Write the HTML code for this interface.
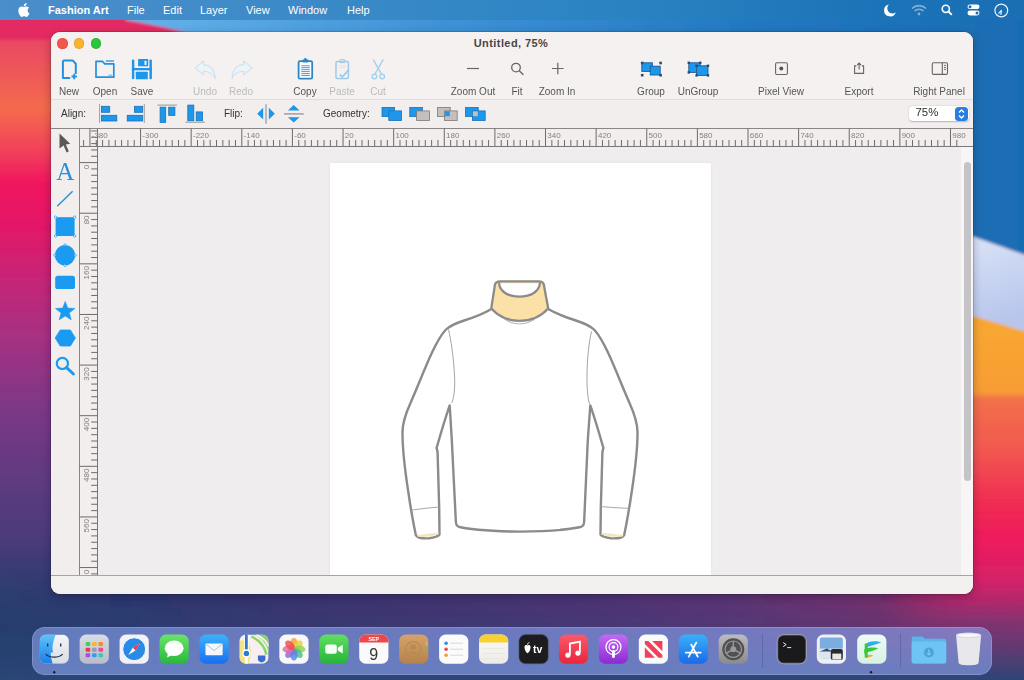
<!DOCTYPE html>
<html><head><meta charset="utf-8">
<style>
*{margin:0;padding:0;box-sizing:border-box}
html,body{width:1024px;height:680px;overflow:hidden}
body{position:relative;font-family:"Liberation Sans",sans-serif;background:#2c3f72}
.abs{position:absolute}
#wall{position:absolute;left:0;top:0;width:1024px;height:680px;overflow:hidden}
#menubar{position:absolute;left:0;top:0;width:1024px;height:20px;color:#fff;font-size:11px}
#menubar span{position:absolute;top:4.2px;white-space:nowrap}
#win{position:absolute;left:50.6px;top:32px;width:922.4px;height:561.8px;border-radius:9px;background:#f4f0f0;overflow:hidden;box-shadow:0 0 0 0.5px rgba(30,20,40,0.35),0 3px 10px rgba(10,10,30,0.3)}
.tl{position:absolute;width:10.4px;height:10.4px;border-radius:50%;top:6px;box-shadow:inset 0 0 0 0.6px rgba(0,0,0,0.14)}
.lbl{position:absolute;top:55px;font-size:10px;color:#555;white-space:nowrap;transform:translateX(-50%)}
.dis{color:#bbb}
svg{position:absolute;overflow:visible}
#dock{position:absolute;left:32px;top:627px;width:960px;height:48px;border-radius:13px;background:rgba(140,165,240,0.6);box-shadow:inset 0 0 0 0.7px rgba(255,255,255,0.22)}
.di{position:absolute;top:7px;width:29px;height:29px;border-radius:7px}
</style></head><body>
<div id="wall"><svg width="1024" height="680" viewBox="0 0 1024 680" style="left:0;top:0">
<defs>
<linearGradient id="gL" x1="0" y1="0" x2="0" y2="680" gradientUnits="userSpaceOnUse">
<stop offset="0.03" stop-color="#e2366e"/>
<stop offset="0.065" stop-color="#ea4a62"/>
<stop offset="0.16" stop-color="#f46a4c"/>
<stop offset="0.22" stop-color="#f2425a"/>
<stop offset="0.27" stop-color="#f0165e"/>
<stop offset="0.33" stop-color="#e41868"/>
<stop offset="0.47" stop-color="#b02e80"/>
<stop offset="0.6" stop-color="#7c3886"/>
<stop offset="0.74" stop-color="#563a7e"/>
<stop offset="0.87" stop-color="#3a3c74"/>
<stop offset="1" stop-color="#2a3c6a"/>
</linearGradient>
<linearGradient id="gB" x1="0" y1="0" x2="1024" y2="0" gradientUnits="userSpaceOnUse">
<stop offset="0" stop-color="#223c6c"/>
<stop offset="0.15" stop-color="#2e3870"/>
<stop offset="0.3" stop-color="#3a3470"/>
<stop offset="0.55" stop-color="#4a3474"/>
<stop offset="0.72" stop-color="#5c3474"/>
<stop offset="0.86" stop-color="#74306e"/>
<stop offset="1" stop-color="#a02c68"/>
</linearGradient>
<linearGradient id="gBv" x1="0" y1="600" x2="0" y2="680" gradientUnits="userSpaceOnUse">
<stop offset="0" stop-color="#2c4676" stop-opacity="0"/>
<stop offset="0.55" stop-color="#2c4676" stop-opacity="0.35"/>
<stop offset="1" stop-color="#2c4676" stop-opacity="1"/>
</linearGradient>
<linearGradient id="gT" x1="130" y1="0" x2="1024" y2="0" gradientUnits="userSpaceOnUse">
<stop offset="0" stop-color="#64b2ea"/>
<stop offset="0.35" stop-color="#3e92d6"/>
<stop offset="0.7" stop-color="#2278c0"/>
<stop offset="1" stop-color="#196cb2"/>
</linearGradient>
<linearGradient id="gR" x1="0" y1="330" x2="0" y2="680" gradientUnits="userSpaceOnUse">
<stop offset="0" stop-color="#f8a632"/>
<stop offset="0.177" stop-color="#f89c34"/>
<stop offset="0.197" stop-color="#f2704a"/>
<stop offset="0.343" stop-color="#f25850"/>
<stop offset="0.486" stop-color="#f02e52"/>
<stop offset="0.6" stop-color="#ee1a5c"/>
<stop offset="0.714" stop-color="#d42268"/>
<stop offset="0.83" stop-color="#9a2e70" stop-opacity="0.8"/>
<stop offset="1" stop-color="#3a4480" stop-opacity="0"/>
</linearGradient>
<linearGradient id="gRh" x1="880" y1="0" x2="1024" y2="0" gradientUnits="userSpaceOnUse">
<stop offset="0" stop-color="#fff" stop-opacity="0"/>
<stop offset="0.6" stop-color="#fff" stop-opacity="1"/>
</linearGradient>
<linearGradient id="gLh" x1="0" y1="0" x2="0" y2="680" gradientUnits="userSpaceOnUse"><stop offset="0.8" stop-color="#fff"/><stop offset="0.93" stop-color="#000"/></linearGradient>
<mask id="mL"><rect x="-10" y="-10" width="200" height="700" fill="url(#gLh)"/></mask>
<mask id="mR"><rect x="860" y="0" width="200" height="700" fill="url(#gRh)"/><rect x="960" y="0" width="100" height="600" fill="#fff"/></mask>
<linearGradient id="gW" x1="973" y1="240" x2="1000" y2="320" gradientUnits="userSpaceOnUse">
<stop offset="0" stop-color="#d8e2f6"/>
<stop offset="1" stop-color="#b8c6ec"/>
</linearGradient>
<filter id="bl" x="-5%" y="-5%" width="110%" height="110%"><feGaussianBlur stdDeviation="1.5"/></filter>
</defs>
<g filter="url(#bl)">
<rect x="-10" y="-10" width="1044" height="700" fill="url(#gB)"/>
<rect x="-10" y="-10" width="120" height="690" fill="url(#gL)" mask="url(#mL)"/>
<path d="M860,290 L1034,300 L1034,690 L860,690 Z" fill="url(#gR)" mask="url(#mR)"/>
<rect x="-10" y="590" width="1044" height="100" fill="url(#gBv)"/>
<path d="M100,-10 L1034,-10 L1034,258 L973,237 L960,232 L960,60 L120,40 Z" fill="url(#gT)"/>
<path d="M-10,-10 L112,-10 L126,20 C145,23 165,27 192,34 L70,40 L-10,40 Z" fill="#e42c62"/>
<path d="M960,232 L1034,258 L1034,334 L960,312 Z" fill="url(#gW)"/>
</g>
</svg></div>
<div id="menubar" style="background:linear-gradient(90deg,#4a8ecb 0%,#3c8ac8 30%,#2a84c2 60%,#1c74b8 85%,#1a6eb4 100%)">
<svg width="12" height="14" viewBox="0 0 12 14" style="left:18px;top:3px"><path d="M9.6,7.4c0-1.7,1.4-2.5,1.5-2.6c-0.8-1.2-2.1-1.3-2.5-1.4c-1.1-0.1-2.1,0.6-2.6,0.6c-0.6,0-1.4-0.6-2.3-0.6C2.6,3.4,1.5,4.1,0.9,5.2c-1.2,2.1-0.3,5.3,0.9,7c0.6,0.8,1.3,1.8,2.1,1.7c0.9,0,1.2-0.6,2.2-0.6c1.1,0,1.3,0.6,2.3,0.6c0.9,0,1.5-0.9,2.1-1.7c0.7-1,0.9-1.9,1-2C11.3,10.2,9.6,9.5,9.6,7.4z M7.9,2.3c0.5-0.6,0.8-1.4,0.7-2.3C7.9,0.1,7.1,0.5,6.6,1.1C6.1,1.6,5.7,2.5,5.8,3.3C6.6,3.4,7.4,2.9,7.9,2.3z" fill="#fff"/></svg>
<span style="left:48px;font-weight:bold">Fashion Art</span>
<span style="left:127px">File</span>
<span style="left:163px">Edit</span>
<span style="left:200px">Layer</span>
<span style="left:246px">View</span>
<span style="left:288px">Window</span>
<span style="left:347px">Help</span>
<svg width="14" height="14" viewBox="0 0 14 14" style="left:883px;top:3px"><path d="M6,1.5 A6,6 0 1,0 12.8,9.2 A5,5 0 0,1 6,1.5 Z" fill="#fff"/></svg>
<svg width="16" height="12" viewBox="0 0 16 12" style="left:911px;top:4px;opacity:0.45"><path d="M1,4.5 A10,10 0 0,1 15,4.5" stroke="#fff" stroke-width="1.6" fill="none"/><path d="M3.5,7 A6.5,6.5 0 0,1 12.5,7" stroke="#fff" stroke-width="1.6" fill="none"/><circle cx="8" cy="10" r="1.4" fill="#fff"/></svg>
<svg width="12" height="12" viewBox="0 0 12 12" style="left:941px;top:4px"><circle cx="4.8" cy="4.8" r="3.6" stroke="#fff" stroke-width="1.6" fill="none"/><path d="M7.5,7.5 L10.8,10.8" stroke="#fff" stroke-width="1.8"/></svg>
<svg width="13" height="12" viewBox="0 0 13 12" style="left:967px;top:4px"><rect x="0.5" y="0.5" width="12" height="4.6" rx="2.3" fill="#fff"/><circle cx="3" cy="2.8" r="1.5" fill="#1c6db6"/><rect x="0.5" y="6.6" width="12" height="4.8" rx="2.4" fill="#fff"/><circle cx="10" cy="9" r="1.5" fill="#1c6db6"/></svg>
<svg width="15" height="15" viewBox="0 0 15 15" style="left:994px;top:2.5px"><circle cx="7.3" cy="7.5" r="6.4" stroke="#e8f4ff" stroke-width="1.2" fill="none"/><path d="M7.4,7.4 L6.9,11.4 M7.4,7.4 L4.9,10.2" stroke="#e8f4ff" stroke-width="1.2" stroke-linecap="round"/></svg>
</div>
<div id="win"><div id="wc" style="position:absolute;left:-50.6px;top:-32px;width:1024px;height:680px">
<!-- title/toolbar bg -->
<div class="abs" style="left:51px;top:32px;width:922px;height:67px;background:#f5f1f1"></div>
<div class="abs" style="left:51px;top:98.8px;width:922px;height:1.6px;background:#e0dcdc"></div>
<div class="abs" style="left:51px;top:100px;width:922px;height:28px;background:#f2eeee"></div>
<div class="tl" style="left:57.2px;top:38.4px;background:#f4564c"></div>
<div class="tl" style="left:73.9px;top:38.4px;background:#f8b42a"></div>
<div class="tl" style="left:91px;top:38.4px;background:#2ac63c"></div>
<div class="abs" style="left:0;width:1022px;top:37px;text-align:center;font-size:11px;letter-spacing:0.42px;font-weight:bold;color:#4a4545">Untitled, 75%</div>
<!-- labels -->
<div class="lbl" style="left:69px;top:85.5px">New</div>
<div class="lbl" style="left:105px;top:85.5px">Open</div>
<div class="lbl" style="left:142px;top:85.5px">Save</div>
<div class="lbl dis" style="left:205px;top:85.5px">Undo</div>
<div class="lbl dis" style="left:241px;top:85.5px">Redo</div>
<div class="lbl" style="left:305px;top:85.5px">Copy</div>
<div class="lbl dis" style="left:342px;top:85.5px">Paste</div>
<div class="lbl dis" style="left:378px;top:85.5px">Cut</div>
<div class="lbl" style="left:473px;top:85.5px">Zoom Out</div>
<div class="lbl" style="left:517px;top:85.5px">Fit</div>
<div class="lbl" style="left:557px;top:85.5px">Zoom In</div>
<div class="lbl" style="left:651px;top:85.5px">Group</div>
<div class="lbl" style="left:698px;top:85.5px">UnGroup</div>
<div class="lbl" style="left:781px;top:85.5px">Pixel View</div>
<div class="lbl" style="left:859px;top:85.5px">Export</div>
<div class="lbl" style="left:939px;top:85.5px">Right Panel</div>
<!-- align bar labels -->
<div class="abs" style="left:61px;top:108px;font-size:10px;color:#333">Align:</div>
<div class="abs" style="left:224px;top:108px;font-size:10px;color:#333">Flip:</div>
<div class="abs" style="left:323px;top:108px;font-size:10px;color:#333">Geometry:</div>
<!-- zoom popup -->
<div class="abs" style="left:909px;top:106px;width:60px;height:15px;border-radius:4px;background:#fff;box-shadow:0 0.5px 1.5px rgba(0,0,0,0.25)"></div>
<div class="abs" style="left:915.5px;top:105px;font-size:11.4px;color:#2e2e2e;line-height:15px">75%</div>
<div class="abs" style="left:955px;top:106.5px;width:13px;height:14px;border-radius:3.5px;background:#2a7de0"></div>
<svg width="13" height="14" viewBox="0 0 13 14" style="left:955px;top:106.5px"><path d="M4,5.5 L6.5,3 L9,5.5 M4,8.5 L6.5,11 L9,8.5" stroke="#fff" stroke-width="1.3" fill="none"/></svg>
<!-- rulers & canvas -->
<div class="abs" style="left:51px;top:128px;width:922px;height:1px;background:#8a8686"></div>
<div class="abs" style="left:51px;top:129px;width:28px;height:446px;background:#f2eeee"></div>
<div class="abs" style="left:80px;top:129px;width:893px;height:17px;background:#f2eeee"></div>
<div class="abs" style="left:80px;top:146px;width:893px;height:1px;background:#7c7878"></div>
<div class="abs" style="left:79px;top:129px;width:1px;height:446px;background:#8a8686"></div>
<div class="abs" style="left:81px;top:147px;width:16px;height:428px;background:#f2eeee"></div>
<div class="abs" style="left:97px;top:129px;width:1px;height:446px;background:#7c7878"></div>
<div class="abs" style="left:98px;top:147px;width:875px;height:428px;background:#efedee"></div>
<div class="abs" style="left:330px;top:163px;width:381px;height:412px;background:#fff;box-shadow:0 0 3px rgba(0,0,0,0.06)"></div>
<div class="abs" style="left:961px;top:147px;width:12px;height:428px;background:#f7f5f5"></div>
<div class="abs" style="left:964px;top:162px;width:7px;height:319px;border-radius:3.5px;background:#c4c4c6"></div>
<!--SVGS-->
<svg width="1024" height="680" style="left:0;top:0"><path d="M62.9,60.4 H72.6 L75.8,63.8 V74 M70.2,77.9 H62.9 V60.4" stroke="#2291df" stroke-width="2" fill="none" stroke-linejoin="round"/><path d="M74.2,73.8 V79.2 M71.5,76.5 H76.9" stroke="#2291df" stroke-width="1.9" fill="none"/><path d="M96,61.3 H102.4 L104.8,63.8 H113.8 V77.2 H96 Z" stroke="#2291df" stroke-width="1.7" fill="none" stroke-linejoin="round"/><path d="M105.8,61 H114" stroke="#2291df" stroke-width="1.3" fill="none"/><path d="M108.5,75.2 H112.2" stroke="#2291df" stroke-width="1" fill="none" opacity="0.7"/><rect x="131.9" y="59.5" width="2.4" height="19.8" rx="1.1" fill="#1e96ea"/><rect x="149.4" y="59.5" width="2.5" height="19.8" rx="1.1" fill="#1e96ea"/><rect x="138.1" y="59.1" width="10.1" height="7.2" rx="0.5" fill="#1e96ea"/><rect x="144.5" y="60.8" width="2" height="4.3" rx="0.5" fill="#f5f1f1"/><rect x="131.9" y="68" width="20" height="2.3" fill="#1e96ea"/><rect x="135.8" y="71.7" width="12" height="7.6" rx="0.5" fill="#1e96ea"/><path d="M195.2,67.8 L203.5,60.9 V64.6 C209.5,64.6 214.8,68.8 215.2,78.6 C213,73.6 208.8,71.2 203.5,71.2 V74.8 Z" stroke="#cde0ee" stroke-width="1.1" fill="#edf3f7" stroke-linejoin="round"/><path d="M252,67.8 L243.7,60.9 V64.6 C237.7,64.6 232.4,68.8 232,78.6 C234.2,73.6 238.4,71.2 243.7,71.2 V74.8 Z" stroke="#cde0ee" stroke-width="1.1" fill="#edf3f7" stroke-linejoin="round"/><rect x="298.6" y="61.2" width="13.6" height="17.4" rx="1.4" stroke="#2a88c8" stroke-width="1.8" fill="#fff"/><rect x="302.2" y="59.4" width="6.4" height="3" rx="0.8" fill="#2a88c8"/><circle cx="305.4" cy="59.3" r="1.3" fill="#2a88c8"/><path d="M301.3,65.8 H309.8" stroke="#3a8ec8" stroke-width="0.9"/><path d="M301.3,67.7 H309.8" stroke="#3a8ec8" stroke-width="0.9"/><path d="M301.3,69.7 H309.8" stroke="#3a8ec8" stroke-width="0.9"/><path d="M301.3,71.6 H309.8" stroke="#3a8ec8" stroke-width="0.9"/><path d="M301.3,73.6 H309.8" stroke="#3a8ec8" stroke-width="0.9"/><path d="M301.3,75.5 H309.8" stroke="#3a8ec8" stroke-width="0.9"/><rect x="336" y="61.5" width="12.4" height="17" rx="1.2" stroke="#9ccbe8" stroke-width="1.5" fill="none"/><rect x="339.5" y="59.6" width="5.6" height="3" rx="0.8" stroke="#9ccbe8" stroke-width="1" fill="none"/><path d="M339.8,74.5 L342.3,77 L348.5,70" stroke="#9ccbe8" stroke-width="1.8" fill="none"/><path d="M338.6,65.6 H346 M338.6,67.6 H346" stroke="#cfe4f2" stroke-width="0.7"/><path d="M373.2,59.5 L381.4,74 M383.2,59.5 L375,74" stroke="#a6cfea" stroke-width="1.5" fill="none"/><circle cx="374.4" cy="76.4" r="2.3" stroke="#a6cfea" stroke-width="1.4" fill="none"/><circle cx="382.2" cy="76.4" r="2.3" stroke="#a6cfea" stroke-width="1.4" fill="none"/><path d="M467,68.5 H479" stroke="#6a6464" stroke-width="1.2"/><circle cx="516" cy="67.6" r="4.3" stroke="#6a6464" stroke-width="1.3" fill="none"/><path d="M519.2,70.8 L523.4,74.8" stroke="#6a6464" stroke-width="1.4"/><path d="M552,68.5 H563.6 M557.8,62.8 V74.2" stroke="#6a6464" stroke-width="1.2"/><rect x="641.8" y="62.8" width="10.6" height="8.6" fill="#1e96ea" stroke="#1a5c98" stroke-width="0.9"/><rect x="650.2" y="66.2" width="10" height="8.8" fill="#1e96ea" stroke="#1a5c98" stroke-width="0.9"/><rect x="640.9000000000001" y="61.7" width="2.6" height="2.6" fill="#2a4a6a"/><rect x="659.3000000000001" y="61.7" width="2.6" height="2.6" fill="#2a4a6a"/><rect x="640.9000000000001" y="73.9" width="2.6" height="2.6" fill="#2a4a6a"/><rect x="659.3000000000001" y="73.9" width="2.6" height="2.6" fill="#2a4a6a"/><rect x="688.8" y="62.8" width="11.4" height="9.6" fill="#1e96ea" stroke="#1a5c98" stroke-width="0.9"/><rect x="696.6" y="65.8" width="11.4" height="9.6" fill="#1e96ea" stroke="#1a5c98" stroke-width="0.9"/><rect x="687.5999999999999" y="61.599999999999994" width="2.4" height="2.4" fill="#2a4a6a"/><rect x="699.0" y="61.599999999999994" width="2.4" height="2.4" fill="#2a4a6a"/><rect x="687.5999999999999" y="71.2" width="2.4" height="2.4" fill="#2a4a6a"/><rect x="695.4" y="64.6" width="2.4" height="2.4" fill="#2a4a6a"/><rect x="706.8" y="64.6" width="2.4" height="2.4" fill="#2a4a6a"/><rect x="695.4" y="74.2" width="2.4" height="2.4" fill="#2a4a6a"/><rect x="706.8" y="74.2" width="2.4" height="2.4" fill="#2a4a6a"/><rect x="775.6" y="62.7" width="11.8" height="11.8" rx="1.2" stroke="#6a6464" stroke-width="1.1" fill="none"/><circle cx="781.3" cy="68.6" r="2" fill="#555"/><path d="M856.4,65.9 H854.6 V73.4 H863.6 V65.9 H861.8" stroke="#6a6464" stroke-width="1.1" fill="none"/><path d="M859.1,69.5 V63.2 M857.2,65 L859.1,63 L861,65" stroke="#6a6464" stroke-width="1.1" fill="none"/><rect x="932.3" y="62.8" width="15.2" height="11.6" rx="1.2" stroke="#6a6464" stroke-width="1.1" fill="none"/><path d="M942.3,62.8 V74.4" stroke="#6a6464" stroke-width="1.1"/><path d="M944,65.4 H946 M944,67.5 H946 M944,69.4 H946" stroke="#6a6464" stroke-width="0.9"/><path d="M99.6,103.9 V123" stroke="#8a8a8a" stroke-width="0.8"/><rect x="101.4" y="106.3" width="8.3" height="6" fill="#1e96ea" stroke="#1872b8" stroke-width="0.8"/><rect x="101.4" y="115.3" width="15.4" height="5.7" fill="#1e96ea" stroke="#1872b8" stroke-width="0.8"/><path d="M144.3,103.9 V123" stroke="#8a8a8a" stroke-width="0.8"/><rect x="134.4" y="106.3" width="8.3" height="6" fill="#1e96ea" stroke="#1872b8" stroke-width="0.8"/><rect x="127.2" y="115.3" width="15.5" height="5.7" fill="#1e96ea" stroke="#1872b8" stroke-width="0.8"/><path d="M157.4,105.1 H177" stroke="#8a8a8a" stroke-width="0.9"/><rect x="160.1" y="107.2" width="5.6" height="15.2" fill="#1e96ea" stroke="#1872b8" stroke-width="0.8"/><rect x="168.7" y="107.2" width="6.2" height="8.2" fill="#1e96ea" stroke="#1872b8" stroke-width="0.8"/><path d="M185.4,122.2 H204.9" stroke="#8a8a8a" stroke-width="0.9"/><rect x="187.8" y="105.1" width="6" height="15.6" fill="#1e96ea" stroke="#1872b8" stroke-width="0.8"/><rect x="196.2" y="111.9" width="6.3" height="8.8" fill="#1e96ea" stroke="#1872b8" stroke-width="0.8"/><path d="M266,104.3 V123.7" stroke="#9a9494" stroke-width="1.2"/><path d="M263.2,107.8 V119.6 L257.2,113.7 Z" fill="#1e96ea"/><path d="M268.8,107.8 V119.6 L274.8,113.7 Z" fill="#1e96ea"/><path d="M284,113.9 H303.7" stroke="#9a9090" stroke-width="1.3"/><path d="M287.9,110.5 H299.6 L293.7,105 Z" fill="#1e96ea"/><path d="M287.9,117.2 H299.6 L293.7,122.5 Z" fill="#1e96ea"/><rect x="382" y="107.4" width="12.6" height="9.2" fill="#1e96ea" stroke="#1872b8" stroke-width="0.8"/><rect x="388.8" y="110.9" width="12.8" height="9.6" fill="#1e96ea" stroke="#1872b8" stroke-width="0.8"/><rect x="389.3" y="111.4" width="5" height="4.8" fill="#1e96ea"/><rect x="409.8" y="107.4" width="12.6" height="9.2" fill="#1e96ea" stroke="#1872b8" stroke-width="0.8"/><rect x="416.6" y="110.9" width="12.8" height="9.6" fill="#c4bfbc" stroke="#7e7874" stroke-width="0.8"/><rect x="437.6" y="107.4" width="12.6" height="9.2" fill="#c4bfbc" stroke="#7e7874" stroke-width="0.8"/><rect x="444.40000000000003" y="110.9" width="12.8" height="9.6" fill="#c4bfbc" stroke="#7e7874" stroke-width="0.8"/><rect x="444.8" y="111.30000000000001" width="5.0000000000000115" height="4.900000000000003" fill="#1e96ea"/><rect x="465.6" y="107.4" width="12.6" height="9.2" fill="#1e96ea" stroke="#1872b8" stroke-width="0.8"/><rect x="472.40000000000003" y="110.9" width="12.8" height="9.6" fill="#1e96ea" stroke="#1872b8" stroke-width="0.8"/><rect x="472.8" y="111.30000000000001" width="5.0000000000000115" height="4.900000000000003" fill="#c4bfbc"/></svg>
<svg width="1024" height="680" style="left:0;top:0;font-family:'Liberation Sans',sans-serif"><path d="M89.94,128.5 V146" stroke="#6e6a6a" stroke-width="1"/><text x="91.74" y="138" font-size="8" fill="#858080">-380</text><path d="M96.27,140 V146" stroke="#6e6a6a" stroke-width="1"/><path d="M102.59,140 V146" stroke="#6e6a6a" stroke-width="1"/><path d="M108.92,140 V146" stroke="#6e6a6a" stroke-width="1"/><path d="M115.25,140 V146" stroke="#6e6a6a" stroke-width="1"/><path d="M121.58,140 V146" stroke="#6e6a6a" stroke-width="1"/><path d="M127.91,140 V146" stroke="#6e6a6a" stroke-width="1"/><path d="M134.23,140 V146" stroke="#6e6a6a" stroke-width="1"/><path d="M140.56,128.5 V146" stroke="#6e6a6a" stroke-width="1"/><text x="142.36" y="138" font-size="8" fill="#858080">-300</text><path d="M146.89,140 V146" stroke="#6e6a6a" stroke-width="1"/><path d="M153.22,140 V146" stroke="#6e6a6a" stroke-width="1"/><path d="M159.54,140 V146" stroke="#6e6a6a" stroke-width="1"/><path d="M165.87,140 V146" stroke="#6e6a6a" stroke-width="1"/><path d="M172.20,140 V146" stroke="#6e6a6a" stroke-width="1"/><path d="M178.53,140 V146" stroke="#6e6a6a" stroke-width="1"/><path d="M184.85,140 V146" stroke="#6e6a6a" stroke-width="1"/><path d="M191.18,128.5 V146" stroke="#6e6a6a" stroke-width="1"/><text x="192.98" y="138" font-size="8" fill="#858080">-220</text><path d="M197.51,140 V146" stroke="#6e6a6a" stroke-width="1"/><path d="M203.84,140 V146" stroke="#6e6a6a" stroke-width="1"/><path d="M210.16,140 V146" stroke="#6e6a6a" stroke-width="1"/><path d="M216.49,140 V146" stroke="#6e6a6a" stroke-width="1"/><path d="M222.82,140 V146" stroke="#6e6a6a" stroke-width="1"/><path d="M229.15,140 V146" stroke="#6e6a6a" stroke-width="1"/><path d="M235.47,140 V146" stroke="#6e6a6a" stroke-width="1"/><path d="M241.80,128.5 V146" stroke="#6e6a6a" stroke-width="1"/><text x="243.60" y="138" font-size="8" fill="#858080">-140</text><path d="M248.13,140 V146" stroke="#6e6a6a" stroke-width="1"/><path d="M254.45,140 V146" stroke="#6e6a6a" stroke-width="1"/><path d="M260.78,140 V146" stroke="#6e6a6a" stroke-width="1"/><path d="M267.11,140 V146" stroke="#6e6a6a" stroke-width="1"/><path d="M273.44,140 V146" stroke="#6e6a6a" stroke-width="1"/><path d="M279.76,140 V146" stroke="#6e6a6a" stroke-width="1"/><path d="M286.09,140 V146" stroke="#6e6a6a" stroke-width="1"/><path d="M292.42,128.5 V146" stroke="#6e6a6a" stroke-width="1"/><text x="294.22" y="138" font-size="8" fill="#858080">-60</text><path d="M298.75,140 V146" stroke="#6e6a6a" stroke-width="1"/><path d="M305.07,140 V146" stroke="#6e6a6a" stroke-width="1"/><path d="M311.40,140 V146" stroke="#6e6a6a" stroke-width="1"/><path d="M317.73,140 V146" stroke="#6e6a6a" stroke-width="1"/><path d="M324.06,140 V146" stroke="#6e6a6a" stroke-width="1"/><path d="M330.38,140 V146" stroke="#6e6a6a" stroke-width="1"/><path d="M336.71,140 V146" stroke="#6e6a6a" stroke-width="1"/><path d="M343.04,128.5 V146" stroke="#6e6a6a" stroke-width="1"/><text x="344.84" y="138" font-size="8" fill="#858080">20</text><path d="M349.37,140 V146" stroke="#6e6a6a" stroke-width="1"/><path d="M355.69,140 V146" stroke="#6e6a6a" stroke-width="1"/><path d="M362.02,140 V146" stroke="#6e6a6a" stroke-width="1"/><path d="M368.35,140 V146" stroke="#6e6a6a" stroke-width="1"/><path d="M374.68,140 V146" stroke="#6e6a6a" stroke-width="1"/><path d="M381.00,140 V146" stroke="#6e6a6a" stroke-width="1"/><path d="M387.33,140 V146" stroke="#6e6a6a" stroke-width="1"/><path d="M393.66,128.5 V146" stroke="#6e6a6a" stroke-width="1"/><text x="395.46" y="138" font-size="8" fill="#858080">100</text><path d="M399.99,140 V146" stroke="#6e6a6a" stroke-width="1"/><path d="M406.31,140 V146" stroke="#6e6a6a" stroke-width="1"/><path d="M412.64,140 V146" stroke="#6e6a6a" stroke-width="1"/><path d="M418.97,140 V146" stroke="#6e6a6a" stroke-width="1"/><path d="M425.30,140 V146" stroke="#6e6a6a" stroke-width="1"/><path d="M431.62,140 V146" stroke="#6e6a6a" stroke-width="1"/><path d="M437.95,140 V146" stroke="#6e6a6a" stroke-width="1"/><path d="M444.28,128.5 V146" stroke="#6e6a6a" stroke-width="1"/><text x="446.08" y="138" font-size="8" fill="#858080">180</text><path d="M450.61,140 V146" stroke="#6e6a6a" stroke-width="1"/><path d="M456.93,140 V146" stroke="#6e6a6a" stroke-width="1"/><path d="M463.26,140 V146" stroke="#6e6a6a" stroke-width="1"/><path d="M469.59,140 V146" stroke="#6e6a6a" stroke-width="1"/><path d="M475.92,140 V146" stroke="#6e6a6a" stroke-width="1"/><path d="M482.24,140 V146" stroke="#6e6a6a" stroke-width="1"/><path d="M488.57,140 V146" stroke="#6e6a6a" stroke-width="1"/><path d="M494.90,128.5 V146" stroke="#6e6a6a" stroke-width="1"/><text x="496.70" y="138" font-size="8" fill="#858080">260</text><path d="M501.23,140 V146" stroke="#6e6a6a" stroke-width="1"/><path d="M507.55,140 V146" stroke="#6e6a6a" stroke-width="1"/><path d="M513.88,140 V146" stroke="#6e6a6a" stroke-width="1"/><path d="M520.21,140 V146" stroke="#6e6a6a" stroke-width="1"/><path d="M526.54,140 V146" stroke="#6e6a6a" stroke-width="1"/><path d="M532.87,140 V146" stroke="#6e6a6a" stroke-width="1"/><path d="M539.19,140 V146" stroke="#6e6a6a" stroke-width="1"/><path d="M545.52,128.5 V146" stroke="#6e6a6a" stroke-width="1"/><text x="547.32" y="138" font-size="8" fill="#858080">340</text><path d="M551.85,140 V146" stroke="#6e6a6a" stroke-width="1"/><path d="M558.17,140 V146" stroke="#6e6a6a" stroke-width="1"/><path d="M564.50,140 V146" stroke="#6e6a6a" stroke-width="1"/><path d="M570.83,140 V146" stroke="#6e6a6a" stroke-width="1"/><path d="M577.16,140 V146" stroke="#6e6a6a" stroke-width="1"/><path d="M583.49,140 V146" stroke="#6e6a6a" stroke-width="1"/><path d="M589.81,140 V146" stroke="#6e6a6a" stroke-width="1"/><path d="M596.14,128.5 V146" stroke="#6e6a6a" stroke-width="1"/><text x="597.94" y="138" font-size="8" fill="#858080">420</text><path d="M602.47,140 V146" stroke="#6e6a6a" stroke-width="1"/><path d="M608.79,140 V146" stroke="#6e6a6a" stroke-width="1"/><path d="M615.12,140 V146" stroke="#6e6a6a" stroke-width="1"/><path d="M621.45,140 V146" stroke="#6e6a6a" stroke-width="1"/><path d="M627.78,140 V146" stroke="#6e6a6a" stroke-width="1"/><path d="M634.11,140 V146" stroke="#6e6a6a" stroke-width="1"/><path d="M640.43,140 V146" stroke="#6e6a6a" stroke-width="1"/><path d="M646.76,128.5 V146" stroke="#6e6a6a" stroke-width="1"/><text x="648.56" y="138" font-size="8" fill="#858080">500</text><path d="M653.09,140 V146" stroke="#6e6a6a" stroke-width="1"/><path d="M659.41,140 V146" stroke="#6e6a6a" stroke-width="1"/><path d="M665.74,140 V146" stroke="#6e6a6a" stroke-width="1"/><path d="M672.07,140 V146" stroke="#6e6a6a" stroke-width="1"/><path d="M678.40,140 V146" stroke="#6e6a6a" stroke-width="1"/><path d="M684.73,140 V146" stroke="#6e6a6a" stroke-width="1"/><path d="M691.05,140 V146" stroke="#6e6a6a" stroke-width="1"/><path d="M697.38,128.5 V146" stroke="#6e6a6a" stroke-width="1"/><text x="699.18" y="138" font-size="8" fill="#858080">580</text><path d="M703.71,140 V146" stroke="#6e6a6a" stroke-width="1"/><path d="M710.03,140 V146" stroke="#6e6a6a" stroke-width="1"/><path d="M716.36,140 V146" stroke="#6e6a6a" stroke-width="1"/><path d="M722.69,140 V146" stroke="#6e6a6a" stroke-width="1"/><path d="M729.02,140 V146" stroke="#6e6a6a" stroke-width="1"/><path d="M735.34,140 V146" stroke="#6e6a6a" stroke-width="1"/><path d="M741.67,140 V146" stroke="#6e6a6a" stroke-width="1"/><path d="M748.00,128.5 V146" stroke="#6e6a6a" stroke-width="1"/><text x="749.80" y="138" font-size="8" fill="#858080">660</text><path d="M754.33,140 V146" stroke="#6e6a6a" stroke-width="1"/><path d="M760.65,140 V146" stroke="#6e6a6a" stroke-width="1"/><path d="M766.98,140 V146" stroke="#6e6a6a" stroke-width="1"/><path d="M773.31,140 V146" stroke="#6e6a6a" stroke-width="1"/><path d="M779.64,140 V146" stroke="#6e6a6a" stroke-width="1"/><path d="M785.97,140 V146" stroke="#6e6a6a" stroke-width="1"/><path d="M792.29,140 V146" stroke="#6e6a6a" stroke-width="1"/><path d="M798.62,128.5 V146" stroke="#6e6a6a" stroke-width="1"/><text x="800.42" y="138" font-size="8" fill="#858080">740</text><path d="M804.95,140 V146" stroke="#6e6a6a" stroke-width="1"/><path d="M811.27,140 V146" stroke="#6e6a6a" stroke-width="1"/><path d="M817.60,140 V146" stroke="#6e6a6a" stroke-width="1"/><path d="M823.93,140 V146" stroke="#6e6a6a" stroke-width="1"/><path d="M830.26,140 V146" stroke="#6e6a6a" stroke-width="1"/><path d="M836.58,140 V146" stroke="#6e6a6a" stroke-width="1"/><path d="M842.91,140 V146" stroke="#6e6a6a" stroke-width="1"/><path d="M849.24,128.5 V146" stroke="#6e6a6a" stroke-width="1"/><text x="851.04" y="138" font-size="8" fill="#858080">820</text><path d="M855.57,140 V146" stroke="#6e6a6a" stroke-width="1"/><path d="M861.89,140 V146" stroke="#6e6a6a" stroke-width="1"/><path d="M868.22,140 V146" stroke="#6e6a6a" stroke-width="1"/><path d="M874.55,140 V146" stroke="#6e6a6a" stroke-width="1"/><path d="M880.88,140 V146" stroke="#6e6a6a" stroke-width="1"/><path d="M887.21,140 V146" stroke="#6e6a6a" stroke-width="1"/><path d="M893.53,140 V146" stroke="#6e6a6a" stroke-width="1"/><path d="M899.86,128.5 V146" stroke="#6e6a6a" stroke-width="1"/><text x="901.66" y="138" font-size="8" fill="#858080">900</text><path d="M906.19,140 V146" stroke="#6e6a6a" stroke-width="1"/><path d="M912.51,140 V146" stroke="#6e6a6a" stroke-width="1"/><path d="M918.84,140 V146" stroke="#6e6a6a" stroke-width="1"/><path d="M925.17,140 V146" stroke="#6e6a6a" stroke-width="1"/><path d="M931.50,140 V146" stroke="#6e6a6a" stroke-width="1"/><path d="M937.82,140 V146" stroke="#6e6a6a" stroke-width="1"/><path d="M944.15,140 V146" stroke="#6e6a6a" stroke-width="1"/><path d="M950.48,128.5 V146" stroke="#6e6a6a" stroke-width="1"/><text x="952.28" y="138" font-size="8" fill="#858080">980</text><path d="M956.81,140 V146" stroke="#6e6a6a" stroke-width="1"/><path d="M83.61,140 V146" stroke="#6e6a6a" stroke-width="1"/><path d="M79.5,162.60 H97.5" stroke="#6e6a6a" stroke-width="1"/><text transform="translate(88.8,164.80) rotate(-90)" text-anchor="end" font-size="8" fill="#858080">0</text><path d="M91.2,168.93 H97.5" stroke="#6e6a6a" stroke-width="1"/><path d="M91.2,175.25 H97.5" stroke="#6e6a6a" stroke-width="1"/><path d="M91.2,181.58 H97.5" stroke="#6e6a6a" stroke-width="1"/><path d="M91.2,187.91 H97.5" stroke="#6e6a6a" stroke-width="1"/><path d="M91.2,194.24 H97.5" stroke="#6e6a6a" stroke-width="1"/><path d="M91.2,200.56 H97.5" stroke="#6e6a6a" stroke-width="1"/><path d="M91.2,206.89 H97.5" stroke="#6e6a6a" stroke-width="1"/><path d="M79.5,213.22 H97.5" stroke="#6e6a6a" stroke-width="1"/><text transform="translate(88.8,215.42) rotate(-90)" text-anchor="end" font-size="8" fill="#858080">80</text><path d="M91.2,219.55 H97.5" stroke="#6e6a6a" stroke-width="1"/><path d="M91.2,225.88 H97.5" stroke="#6e6a6a" stroke-width="1"/><path d="M91.2,232.20 H97.5" stroke="#6e6a6a" stroke-width="1"/><path d="M91.2,238.53 H97.5" stroke="#6e6a6a" stroke-width="1"/><path d="M91.2,244.86 H97.5" stroke="#6e6a6a" stroke-width="1"/><path d="M91.2,251.19 H97.5" stroke="#6e6a6a" stroke-width="1"/><path d="M91.2,257.51 H97.5" stroke="#6e6a6a" stroke-width="1"/><path d="M79.5,263.84 H97.5" stroke="#6e6a6a" stroke-width="1"/><text transform="translate(88.8,266.04) rotate(-90)" text-anchor="end" font-size="8" fill="#858080">160</text><path d="M91.2,270.17 H97.5" stroke="#6e6a6a" stroke-width="1"/><path d="M91.2,276.49 H97.5" stroke="#6e6a6a" stroke-width="1"/><path d="M91.2,282.82 H97.5" stroke="#6e6a6a" stroke-width="1"/><path d="M91.2,289.15 H97.5" stroke="#6e6a6a" stroke-width="1"/><path d="M91.2,295.48 H97.5" stroke="#6e6a6a" stroke-width="1"/><path d="M91.2,301.80 H97.5" stroke="#6e6a6a" stroke-width="1"/><path d="M91.2,308.13 H97.5" stroke="#6e6a6a" stroke-width="1"/><path d="M79.5,314.46 H97.5" stroke="#6e6a6a" stroke-width="1"/><text transform="translate(88.8,316.66) rotate(-90)" text-anchor="end" font-size="8" fill="#858080">240</text><path d="M91.2,320.79 H97.5" stroke="#6e6a6a" stroke-width="1"/><path d="M91.2,327.11 H97.5" stroke="#6e6a6a" stroke-width="1"/><path d="M91.2,333.44 H97.5" stroke="#6e6a6a" stroke-width="1"/><path d="M91.2,339.77 H97.5" stroke="#6e6a6a" stroke-width="1"/><path d="M91.2,346.10 H97.5" stroke="#6e6a6a" stroke-width="1"/><path d="M91.2,352.42 H97.5" stroke="#6e6a6a" stroke-width="1"/><path d="M91.2,358.75 H97.5" stroke="#6e6a6a" stroke-width="1"/><path d="M79.5,365.08 H97.5" stroke="#6e6a6a" stroke-width="1"/><text transform="translate(88.8,367.28) rotate(-90)" text-anchor="end" font-size="8" fill="#858080">320</text><path d="M91.2,371.41 H97.5" stroke="#6e6a6a" stroke-width="1"/><path d="M91.2,377.73 H97.5" stroke="#6e6a6a" stroke-width="1"/><path d="M91.2,384.06 H97.5" stroke="#6e6a6a" stroke-width="1"/><path d="M91.2,390.39 H97.5" stroke="#6e6a6a" stroke-width="1"/><path d="M91.2,396.72 H97.5" stroke="#6e6a6a" stroke-width="1"/><path d="M91.2,403.04 H97.5" stroke="#6e6a6a" stroke-width="1"/><path d="M91.2,409.37 H97.5" stroke="#6e6a6a" stroke-width="1"/><path d="M79.5,415.70 H97.5" stroke="#6e6a6a" stroke-width="1"/><text transform="translate(88.8,417.90) rotate(-90)" text-anchor="end" font-size="8" fill="#858080">400</text><path d="M91.2,422.03 H97.5" stroke="#6e6a6a" stroke-width="1"/><path d="M91.2,428.35 H97.5" stroke="#6e6a6a" stroke-width="1"/><path d="M91.2,434.68 H97.5" stroke="#6e6a6a" stroke-width="1"/><path d="M91.2,441.01 H97.5" stroke="#6e6a6a" stroke-width="1"/><path d="M91.2,447.34 H97.5" stroke="#6e6a6a" stroke-width="1"/><path d="M91.2,453.66 H97.5" stroke="#6e6a6a" stroke-width="1"/><path d="M91.2,459.99 H97.5" stroke="#6e6a6a" stroke-width="1"/><path d="M79.5,466.32 H97.5" stroke="#6e6a6a" stroke-width="1"/><text transform="translate(88.8,468.52) rotate(-90)" text-anchor="end" font-size="8" fill="#858080">480</text><path d="M91.2,472.65 H97.5" stroke="#6e6a6a" stroke-width="1"/><path d="M91.2,478.97 H97.5" stroke="#6e6a6a" stroke-width="1"/><path d="M91.2,485.30 H97.5" stroke="#6e6a6a" stroke-width="1"/><path d="M91.2,491.63 H97.5" stroke="#6e6a6a" stroke-width="1"/><path d="M91.2,497.96 H97.5" stroke="#6e6a6a" stroke-width="1"/><path d="M91.2,504.28 H97.5" stroke="#6e6a6a" stroke-width="1"/><path d="M91.2,510.61 H97.5" stroke="#6e6a6a" stroke-width="1"/><path d="M79.5,516.94 H97.5" stroke="#6e6a6a" stroke-width="1"/><text transform="translate(88.8,519.14) rotate(-90)" text-anchor="end" font-size="8" fill="#858080">560</text><path d="M91.2,523.27 H97.5" stroke="#6e6a6a" stroke-width="1"/><path d="M91.2,529.59 H97.5" stroke="#6e6a6a" stroke-width="1"/><path d="M91.2,535.92 H97.5" stroke="#6e6a6a" stroke-width="1"/><path d="M91.2,542.25 H97.5" stroke="#6e6a6a" stroke-width="1"/><path d="M91.2,548.58 H97.5" stroke="#6e6a6a" stroke-width="1"/><path d="M91.2,554.90 H97.5" stroke="#6e6a6a" stroke-width="1"/><path d="M91.2,561.23 H97.5" stroke="#6e6a6a" stroke-width="1"/><path d="M79.5,567.56 H97.5" stroke="#6e6a6a" stroke-width="1"/><text transform="translate(88.8,569.76) rotate(-90)" text-anchor="end" font-size="8" fill="#858080">0</text><path d="M91.2,573.89 H97.5" stroke="#6e6a6a" stroke-width="1"/><path d="M91.2,156.27 H97.5" stroke="#6e6a6a" stroke-width="1"/><path d="M91.2,149.94 H97.5" stroke="#6e6a6a" stroke-width="1"/><path d="M91.2,143.62 H97.5" stroke="#6e6a6a" stroke-width="1"/><path d="M91.2,137.29 H97.5" stroke="#6e6a6a" stroke-width="1"/><path d="M91.2,130.96 H97.5" stroke="#6e6a6a" stroke-width="1"/></svg>
<svg width="1024" height="680" style="left:0;top:0"><path d="M59.5,133.5 L70.2,143.8 L65.8,144.4 L68.8,151.3 L66.6,152.5 L63.6,145.6 L59.5,148.6 Z" fill="#5c5858"/><text x="65.2" y="179.6" text-anchor="middle" font-family="Liberation Serif" font-size="25" fill="#2a90d8">A</text><path d="M57.2,206.2 L72.6,191.3" stroke="#2a90d8" stroke-width="1.5"/><rect x="55.6" y="217.2" width="19" height="18.8" fill="#1a9af0"/><circle cx="55.6" cy="217.2" r="1.2" fill="#fff" stroke="#1a9af0" stroke-width="0.8"/><circle cx="74.6" cy="217.2" r="1.2" fill="#fff" stroke="#1a9af0" stroke-width="0.8"/><circle cx="55.6" cy="236" r="1.2" fill="#fff" stroke="#1a9af0" stroke-width="0.8"/><circle cx="74.6" cy="236" r="1.2" fill="#fff" stroke="#1a9af0" stroke-width="0.8"/><circle cx="65" cy="255.2" r="10.2" fill="#1a9af0"/><circle cx="65" cy="245" r="1.1" fill="#fff" stroke="#1a9af0" stroke-width="0.8"/><circle cx="65" cy="265.4" r="1.1" fill="#fff" stroke="#1a9af0" stroke-width="0.8"/><circle cx="54.8" cy="255.2" r="1.1" fill="#fff" stroke="#1a9af0" stroke-width="0.8"/><circle cx="75.2" cy="255.2" r="1.1" fill="#fff" stroke="#1a9af0" stroke-width="0.8"/><rect x="55.2" y="275.8" width="19.8" height="13.2" rx="2.6" fill="#1a9af0"/><polygon points="65.20,301.40 67.73,308.12 74.90,308.45 69.29,312.93 71.20,319.85 65.20,315.90 59.20,319.85 61.11,312.93 55.50,308.45 62.67,308.12" fill="#1a9af0" stroke="#1a9af0" stroke-width="0.6" stroke-linejoin="round"/><polygon points="55.2,338 60.2,330 70.4,330 75.4,338 70.4,346 60.2,346" fill="#1a9af0" stroke="#1a9af0" stroke-width="0.8" stroke-linejoin="round"/><circle cx="62.4" cy="363.4" r="5.6" stroke="#1a9af0" stroke-width="2.2" fill="none"/><path d="M66.6,367.6 L73.4,374" stroke="#1a9af0" stroke-width="3" stroke-linecap="round"/></svg>
<svg width="1024" height="680" style="left:0;top:0"><path d="M491.3,309 C484,313.5 472,318 464.1,320.5 C455,323.5 449,326.5 445.5,330 C441,335 437,342 432,352.5 C425,367.5 418,386 410.5,403 C405.5,414 402.6,423 402.5,432 C402.4,444 405,470 408,490 C410.5,507 413.5,524 415.8,535 C418,538.5 424,538.6 429,538.2 C434,537.6 438,536.5 439.5,534.5 L439.2,508 L437.6,453 C437.4,450 436.8,449 436.6,448 C440,436 445,419 449.7,405.4 L451.8,440 L455.9,522.5 C456.2,525.5 457.5,526.8 460.5,527.3 C468,528.8 490,531.4 520,531.6 C550,531.4 572,528.8 579.5,527.3 C582.5,526.8 583.8,525.5 584.1,522.5 L587.8,440 L590.3,405.4 C595,419 600,436 603.4,448 C603.2,449 602.6,450 602.4,453 L600.8,508 L600.5,534.5 C602,536.5 606,537.6 611,538.2 C616,538.6 622,538.5 624.2,535 C626.5,524 629.5,507 632,490 C635,470 637.6,444 637.5,432 C637.4,423 634.5,414 629.5,403 C622,386 615,367.5 608,352.5 C603,342 599,335 594.5,330 C591,326.5 585,323.5 575.9,320.5 C568,318 556,313.5 548.2,309" fill="#fff" stroke="#8c8a8a" stroke-width="2.4" stroke-linejoin="round"/><path d="M491.3,308.5 C492.4,300 494.2,291 494.8,285 C495.2,282.2 497,281.4 500.5,281.3 L538.5,281.3 C542,281.4 543.6,282.2 544,285 C544.8,291 546.8,300 548.2,308.5 C541,316.5 531,320.8 519.6,320.8 C508.5,320.8 498.5,316.5 491.3,308.5 Z" fill="#fbe0a8" stroke="#8c8a8a" stroke-width="2.3" stroke-linejoin="round"/><path d="M499.2,283.2 C499.5,291.5 508,296.6 519.6,296.6 C531,296.6 539.3,291.5 539.8,283.2 Z" fill="#fff"/><path d="M499.2,283.4 C499.5,291.5 508,296.6 519.6,296.6 C531,296.6 539.3,291.5 539.8,283.4" fill="none" stroke="#8c8a8a" stroke-width="2.2" stroke-linecap="round"/><path d="M503.5,318.4 C509,322.5 514,323.8 519.6,323.8 C525,323.8 530,322.5 535.6,318.4" fill="none" stroke="#9a9898" stroke-width="0.8"/><path d="M448.5,329.5 C451,340 453.5,356 454.6,377 C455.2,390 453.5,399 451.8,403" fill="none" stroke="#9a9898" stroke-width="0.9"/><path d="M591.5,331.5 C589,342 587.2,358 587,375 C586.8,390 588,399 589.5,404" fill="none" stroke="#9a9898" stroke-width="0.9"/><path d="M411.4,510.2 C420,508.8 430,507.8 439.3,507" fill="none" stroke="#a09e9e" stroke-width="0.9"/><path d="M600.7,506.6 C610,507.4 620,508 629.2,508.4" fill="none" stroke="#a09e9e" stroke-width="0.9"/><path d="M417,535.2 C423,534.4 432,533.5 438.6,532.6 L438.6,534.2 C434,536 424,537.3 418,536.8 Z" fill="#f3e6b8"/><path d="M601.4,532.8 C608,533.5 616,534.3 623.4,535 L623,536.6 C616,537.3 606,536 601.4,534.4 Z" fill="#f3e6b8"/></svg>
<!--/SVGS-->
<div class="abs" style="left:51px;top:575px;width:922px;height:1px;background:#a8a4a4"></div>
<div class="abs" style="left:51px;top:576px;width:922px;height:19px;background:#f2efef"></div>
</div></div>
<div id="dock"></div>
<svg width="1024" height="680" style="left:0;top:0;font-family:'Liberation Sans',sans-serif"><defs><linearGradient id="fL" x1="0" y1="0" x2="0" y2="1"><stop offset="0" stop-color="#5ec4f8"/><stop offset="1" stop-color="#1a7ee6"/></linearGradient><linearGradient id="fR" x1="0" y1="0" x2="0" y2="1"><stop offset="0" stop-color="#f4f6f8"/><stop offset="1" stop-color="#d8dde4"/></linearGradient><linearGradient id="gLP" x1="0" y1="0" x2="0" y2="1"><stop offset="0" stop-color="#d8dce6"/><stop offset="1" stop-color="#b8bcc8"/></linearGradient><linearGradient id="gMs" x1="0" y1="0" x2="0" y2="1"><stop offset="0" stop-color="#6ae46a"/><stop offset="1" stop-color="#28b83a"/></linearGradient><linearGradient id="gMl" x1="0" y1="0" x2="0" y2="1"><stop offset="0" stop-color="#3ab2fa"/><stop offset="1" stop-color="#1a6ef0"/></linearGradient><linearGradient id="gFT" x1="0" y1="0" x2="0" y2="1"><stop offset="0" stop-color="#62de62"/><stop offset="1" stop-color="#26b43a"/></linearGradient><linearGradient id="gCt" x1="0" y1="0" x2="0" y2="1"><stop offset="0" stop-color="#d4a26a"/><stop offset="1" stop-color="#b4824a"/></linearGradient><linearGradient id="gNt" x1="0" y1="0" x2="0" y2="1"><stop offset="0" stop-color="#fbfaf6"/><stop offset="1" stop-color="#ecebe6"/></linearGradient><linearGradient id="gMu" x1="0" y1="0" x2="0" y2="1"><stop offset="0" stop-color="#fa5a6a"/><stop offset="1" stop-color="#e8263c"/></linearGradient><linearGradient id="gPd" x1="0" y1="0" x2="0" y2="1"><stop offset="0" stop-color="#c46af4"/><stop offset="1" stop-color="#8a2ad4"/></linearGradient><linearGradient id="gAS" x1="0" y1="0" x2="0" y2="1"><stop offset="0" stop-color="#3ab0fa"/><stop offset="1" stop-color="#1a6ae8"/></linearGradient><linearGradient id="gSP" x1="0" y1="0" x2="0" y2="1"><stop offset="0" stop-color="#bcbcc0"/><stop offset="1" stop-color="#8a8a8e"/></linearGradient><linearGradient id="gFA" x1="0" y1="0" x2="0" y2="1"><stop offset="0" stop-color="#f0faf4"/><stop offset="1" stop-color="#d8f0e4"/></linearGradient></defs><g transform="translate(39.70,634.6)"><clipPath id="cpF"><rect width="29.2" height="29.2" rx="6.6"/></clipPath><g clip-path="url(#cpF)"><rect width="29.2" height="29.2" fill="url(#fR)"/><path d="M0,0 H16 C13,8 12,14 13.5,18 H11 C11,23 12,26 13,29.2 H0 Z" fill="url(#fL)"/></g><path d="M8,9 V12 M21,9 V12" stroke="#1a2a4a" stroke-width="1.3"/><path d="M6,19.5 C10,23.5 19,23.5 23,19.5" stroke="#1a2a4a" stroke-width="1.1" fill="none"/></g><g transform="translate(79.64,634.6)"><rect x="0" y="0" width="29.2" height="29.2" rx="6.6" fill="url(#gLP)"/><rect x="6.0" y="7.5" width="4.6" height="4" rx="1" fill="#4cc864"/><rect x="12.4" y="7.5" width="4.6" height="4" rx="1" fill="#f8b830"/><rect x="18.8" y="7.5" width="4.6" height="4" rx="1" fill="#f88a30"/><rect x="6.0" y="13.1" width="4.6" height="4" rx="1" fill="#e83a48"/><rect x="12.4" y="13.1" width="4.6" height="4" rx="1" fill="#9a9aa8"/><rect x="18.8" y="13.1" width="4.6" height="4" rx="1" fill="#f04a8a"/><rect x="6.0" y="18.7" width="4.6" height="4" rx="1" fill="#b04ae0"/><rect x="12.4" y="18.7" width="4.6" height="4" rx="1" fill="#3a9af0"/><rect x="18.8" y="18.7" width="4.6" height="4" rx="1" fill="#3ac8b0"/></g><g transform="translate(119.58,634.6)"><rect x="0" y="0" width="29.2" height="29.2" rx="6.6" fill="#f2f2f4"/><circle cx="14.6" cy="14.6" r="11.5" fill="#2a8ae8" stroke="#fff" stroke-width="1"/><path d="M20.5,8.7 L16,16 L8.7,20.5 L13.2,13.2 Z" fill="#fff"/><path d="M20.5,8.7 L16,16 L13.2,13.2 Z" fill="#f03a3a"/></g><g transform="translate(159.52,634.6)"><rect x="0" y="0" width="29.2" height="29.2" rx="6.6" fill="url(#gMs)"/><ellipse cx="14.6" cy="13.6" rx="9.4" ry="7.8" fill="#fff"/><path d="M8.5,18.5 L7.5,23 L12.5,20.5 Z" fill="#fff"/></g><g transform="translate(199.46,634.6)"><rect x="0" y="0" width="29.2" height="29.2" rx="6.6" fill="url(#gMl)"/><rect x="6" y="9" width="17.2" height="11.6" rx="1" fill="#f4f6fa"/><path d="M6,9.2 L14.6,16 L23.2,9.2" stroke="#9ab4d4" stroke-width="0.8" fill="none"/></g><g transform="translate(239.40,634.6)"><clipPath id="cpM"><rect width="29.2" height="29.2" rx="6.6"/></clipPath><g clip-path="url(#cpM)"><rect width="29.2" height="29.2" fill="#f6eef0"/><path d="M0,6 L9,6 L12,18 L9,29.2 H0 Z" fill="#f4e06a" opacity="0.8"/><path d="M14,0 C22,3 28,10 29.2,18 V0 Z" fill="#8ad46a"/><path d="M12,2 C19,5 25,11 27,20" stroke="#8ad46a" stroke-width="2.6" fill="none"/><path d="M17,0 C23,3 28,8 29.2,12" stroke="#f6eef0" stroke-width="2" fill="none"/><path d="M7,0 V17" stroke="#2a7ad8" stroke-width="2.8"/><path d="M5,0 V17 M9,0 V17" stroke="#fff" stroke-width="0.7"/><path d="M7,22 V29.2" stroke="#fff" stroke-width="2.6"/><circle cx="7" cy="18.8" r="3.4" fill="#2a7ad8" stroke="#fff" stroke-width="1.3"/><path d="M18.5,21 H26 V25 C26,27 22.2,28 22.2,28 C22.2,28 18.5,27 18.5,25 Z" fill="#3a6ad0"/></g></g><g transform="translate(279.34,634.6)"><rect x="0" y="0" width="29.2" height="29.2" rx="6.6" fill="#f8f8f8"/><ellipse cx="14.60" cy="9.00" rx="5.8" ry="3.6" transform="rotate(-90 14.60 9.00)" fill="#f8a030" opacity="0.82"/><ellipse cx="18.56" cy="10.64" rx="5.8" ry="3.6" transform="rotate(-45 18.56 10.64)" fill="#e8d040" opacity="0.82"/><ellipse cx="20.20" cy="14.60" rx="5.8" ry="3.6" transform="rotate(0 20.20 14.60)" fill="#8ad44a" opacity="0.82"/><ellipse cx="18.56" cy="18.56" rx="5.8" ry="3.6" transform="rotate(45 18.56 18.56)" fill="#4ac08a" opacity="0.82"/><ellipse cx="14.60" cy="20.20" rx="5.8" ry="3.6" transform="rotate(90 14.60 20.20)" fill="#4a8ae8" opacity="0.82"/><ellipse cx="10.64" cy="18.56" rx="5.8" ry="3.6" transform="rotate(135 10.64 18.56)" fill="#8a6ad8" opacity="0.82"/><ellipse cx="9.00" cy="14.60" rx="5.8" ry="3.6" transform="rotate(180 9.00 14.60)" fill="#e06aa0" opacity="0.82"/><ellipse cx="10.64" cy="10.64" rx="5.8" ry="3.6" transform="rotate(225 10.64 10.64)" fill="#f04a4a" opacity="0.82"/></g><g transform="translate(319.28,634.6)"><rect x="0" y="0" width="29.2" height="29.2" rx="6.6" fill="url(#gFT)"/><rect x="6" y="10" width="11.5" height="9.2" rx="2.2" fill="#f4fff4"/><path d="M18.5,13.2 L23.5,10.2 V19 L18.5,16 Z" fill="#f4fff4"/></g><g transform="translate(359.22,634.6)"><rect x="0" y="0" width="29.2" height="29.2" rx="6.6" fill="#fafafa"/><path d="M0,6.6 A6.6,6.6 0 0 1 6.6,0 H22.6 A6.6,6.6 0 0 1 29.2,6.6 V8 H0 Z" fill="#f04848"/><text x="14.6" y="6.6" text-anchor="middle" font-size="5.4" font-weight="bold" fill="#fff">SEP</text><text x="14.6" y="25.5" text-anchor="middle" font-size="16" fill="#333">9</text></g><g transform="translate(399.16,634.6)"><rect x="0" y="0" width="29.2" height="29.2" rx="6.6" fill="url(#gCt)"/><circle cx="14" cy="14.6" r="7.6" fill="none" stroke="#b88a50" stroke-width="1.2"/><circle cx="14" cy="12.5" r="2.8" fill="#b88a50"/><path d="M9.5,19.5 C11,16 17,16 18.5,19.5" fill="#b88a50"/><rect x="26.5" y="7" width="1.6" height="4" fill="#e0b07a"/><rect x="26.5" y="13" width="1.6" height="4" fill="#8ab06a"/></g><g transform="translate(439.10,634.6)"><rect x="0" y="0" width="29.2" height="29.2" rx="6.6" fill="#fbfbfb"/><circle cx="7" cy="8.6" r="1.8" fill="#3a8af0"/><circle cx="7" cy="14.6" r="1.8" fill="#ee4a4a"/><circle cx="7" cy="20.6" r="1.8" fill="#f0a030"/><path d="M11,8.6 H24 M11,14.6 H24 M11,20.6 H24" stroke="#d0d0d4" stroke-width="0.8"/></g><g transform="translate(479.04,634.6)"><rect x="0" y="0" width="29.2" height="29.2" rx="6.6" fill="url(#gNt)"/><path d="M0,6.6 A6.6,6.6 0 0 1 6.6,0 H22.6 A6.6,6.6 0 0 1 29.2,6.6 V8 H0 Z" fill="#f8d030"/><path d="M3,14 H26 M3,19 H26 M3,24 H26" stroke="#e2e0da" stroke-width="0.6"/></g><g transform="translate(518.98,634.6)"><rect x="0" y="0" width="29.2" height="29.2" rx="6.6" fill="#1c1c1e" stroke="#555" stroke-width="0.6"/><path d="M5.5,12.5 C5.5,10 8,10 8.6,10.8 C9.2,10 11.6,10 11.6,12.5 C11.6,15.5 9.5,18.6 8.6,18.6 C7.6,18.6 5.5,15.5 5.5,12.5 Z" fill="#fff"/><path d="M8.6,10.2 C8.6,8.6 9.6,8 10.4,8" stroke="#fff" stroke-width="0.9" fill="none"/><text x="18.8" y="18.8" text-anchor="middle" font-size="10.5" font-weight="bold" fill="#fff">tv</text></g><g transform="translate(558.92,634.6)"><rect x="0" y="0" width="29.2" height="29.2" rx="6.6" fill="url(#gMu)"/><path d="M11,20 V9 L21,7 V18" stroke="#fff" stroke-width="1.8" fill="none"/><circle cx="9" cy="20.5" r="2.6" fill="#fff"/><circle cx="19" cy="18.5" r="2.6" fill="#fff"/></g><g transform="translate(598.86,634.6)"><rect x="0" y="0" width="29.2" height="29.2" rx="6.6" fill="url(#gPd)"/><circle cx="14.6" cy="12.5" r="7.5" stroke="#fff" stroke-width="1.3" fill="none"/><circle cx="14.6" cy="12.5" r="4.4" stroke="#fff" stroke-width="1.2" fill="none"/><circle cx="14.6" cy="12.5" r="1.8" fill="#fff"/><rect x="13.2" y="15.5" width="2.8" height="8" rx="1.4" fill="#fff"/></g><g transform="translate(638.80,634.6)"><rect x="0" y="0" width="29.2" height="29.2" rx="6.6" fill="#fafafa"/><path d="M6,6.4 H9.6 L23.6,20.4 V23.2 H19.8 L6,9.4 Z" fill="#f0405a"/><path d="M6,13 L16.2,23.2 H6 Z" fill="#f0405a"/><path d="M13.4,6.4 H23.6 V16.6 Z" fill="#f0405a"/></g><g transform="translate(678.74,634.6)"><rect x="0" y="0" width="29.2" height="29.2" rx="6.6" fill="url(#gAS)"/><path d="M10,22 L17.5,8 M19,22 L12.5,10 M7,18 H22" stroke="#fff" stroke-width="1.8" stroke-linecap="round" fill="none"/></g><g transform="translate(718.68,634.6)"><rect x="0" y="0" width="29.2" height="29.2" rx="6.6" fill="url(#gSP)"/><circle cx="14.6" cy="14.6" r="11" fill="#505052"/><circle cx="14.6" cy="14.6" r="8.2" fill="none" stroke="#9a9a9c" stroke-width="1.2"/><circle cx="14.6" cy="14.6" r="3" fill="#9a9a9c"/><path d="M14.6,14.6 L14.6,6.4 M14.6,14.6 L7.5,18.7 M14.6,14.6 L21.7,18.7" stroke="#9a9a9c" stroke-width="1.4"/></g><path d="M762.5,634 V668" stroke="#5a5a90" stroke-width="0.8" opacity="0.7"/><g transform="translate(777.20,634.6)"><rect x="0" y="0" width="29.2" height="29.2" rx="6.6" fill="#4a4a4e" stroke="#c8c8cc" stroke-width="0.6"/><rect x="1.2" y="1.2" width="26.8" height="26.8" rx="5.6" fill="#1a1a1c"/><path d="M6,8 L9,10 L6,12 M10,13 H14" stroke="#fff" stroke-width="0.9" fill="none"/></g><g transform="translate(816.80,634.6)"><rect x="0" y="0" width="29.2" height="29.2" rx="6.6" fill="#eef0f4"/><rect x="3" y="3" width="23" height="21" rx="2" fill="#7aaee0"/><rect x="3" y="14" width="23" height="10" fill="#dde6f0"/><path d="M3,17 L10,14 L16,17" fill="#3a4a6a"/><rect x="14" y="14.5" width="12" height="11" rx="2" fill="#2a2a2e"/><rect x="15.5" y="19" width="9" height="6" fill="#e8e8ea"/></g><g transform="translate(857.20,634.6)"><rect x="0" y="0" width="29.2" height="29.2" rx="6.6" fill="url(#gFA)"/><path d="M9,9 C13,6 20,6 24,8 C20,10 13,11 9,13 Z" fill="#2ab0f0"/><path d="M7,15 C11,12.5 18,12.5 21,14 C17,16.5 11,17 7,19 Z" fill="#3ac83a"/><path d="M9,21 C11,20 15,20 16,21 C14,22.5 11,23 9,23.5 Z" fill="#f4b030"/><path d="M9,9 V23" stroke="#3ac83a" stroke-width="3"/></g><path d="M900.5,634 V668" stroke="#5a5a90" stroke-width="0.8" opacity="0.7"/><g transform="translate(911.7,636.5)"><path d="M0,2 C0,0.8 0.8,0 2,0 H11 L13,2.2 H32.5 C33.7,2.2 34.5,3 34.5,4.2 V25 C34.5,26.2 33.7,27 32.5,27 H2 C0.8,27 0,26.2 0,25 Z" fill="#5ab6ea"/><rect x="0" y="5" width="34.5" height="22" rx="2" fill="#6ec4f4"/><circle cx="17.2" cy="16" r="5" fill="#4aa4dc"/><path d="M17.2,13 V18.5 M15,16.5 L17.2,18.7 L19.4,16.5" stroke="#8ad4fa" stroke-width="1" fill="none"/></g><g transform="translate(955.6,632.7)"><path d="M0.5,2.5 C0.5,1 5,0 13,0 C21,0 25.5,1 25.5,2.5 L23,30 C22.7,31.8 19,32.5 13,32.5 C7,32.5 3.3,31.8 3,30 Z" fill="#e8e8ec"/><ellipse cx="13" cy="2.6" rx="12.2" ry="2.2" fill="#f8f8fa" stroke="#c8c8d0" stroke-width="0.6"/></g><circle cx="54.2" cy="672.2" r="1.2" fill="#1a1a2a"/><circle cx="871" cy="672.2" r="1.2" fill="#1a1a2a"/></svg>
</body></html>
